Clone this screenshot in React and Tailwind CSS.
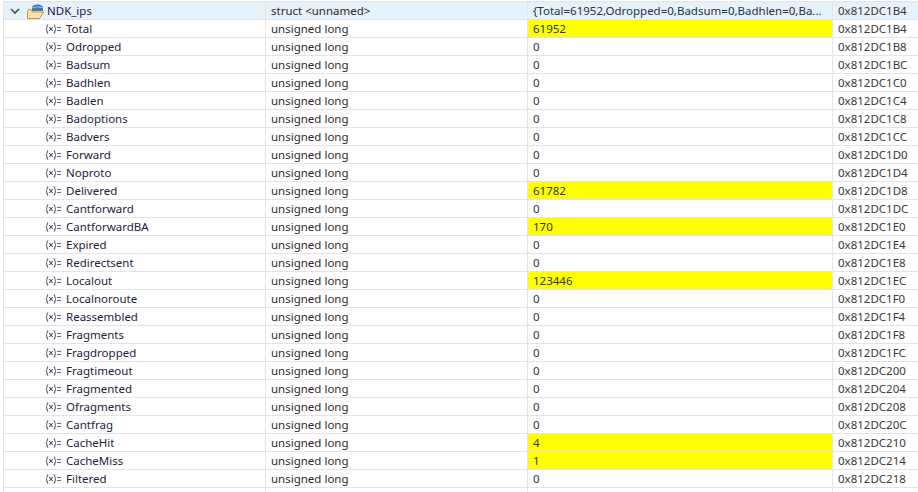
const rows = [
  ["Total", "61952", "0x812DC1B4", 1],
  ["Odropped", "0", "0x812DC1B8"],
  ["Badsum", "0", "0x812DC1BC"],
  ["Badhlen", "0", "0x812DC1C0"],
  ["Badlen", "0", "0x812DC1C4"],
  ["Badoptions", "0", "0x812DC1C8"],
  ["Badvers", "0", "0x812DC1CC"],
  ["Forward", "0", "0x812DC1D0"],
  ["Noproto", "0", "0x812DC1D4"],
  ["Delivered", "61782", "0x812DC1D8", 1],
  ["Cantforward", "0", "0x812DC1DC"],
  ["CantforwardBA", "170", "0x812DC1E0", 1],
  ["Expired", "0", "0x812DC1E4"],
  ["Redirectsent", "0", "0x812DC1E8"],
  ["Localout", "123446", "0x812DC1EC", 1],
  ["Localnoroute", "0", "0x812DC1F0"],
  ["Reassembled", "0", "0x812DC1F4"],
  ["Fragments", "0", "0x812DC1F8"],
  ["Fragdropped", "0", "0x812DC1FC"],
  ["Fragtimeout", "0", "0x812DC200"],
  ["Fragmented", "0", "0x812DC204"],
  ["Ofragments", "0", "0x812DC208"],
  ["Cantfrag", "0", "0x812DC20C"],
  ["CacheHit", "4", "0x812DC210", 1],
  ["CacheMiss", "1", "0x812DC214", 1],
  ["Filtered", "0", "0x812DC218"],
];

function Row({ name, icon, type, value, addr, hl, selected }) {
  return (
    <div className={`flex h-[18px] shrink-0 border-b border-[#e4e4e4] ${selected ? "bg-[#e5f1fb]" : "bg-white"}`}>
      <div className="flex w-[262px] shrink-0 items-center border-r border-[#e4e4e4] pt-px">
        {icon}
        <span className="truncate text-[#22223c]">{name}</span>
      </div>
      <div className="flex w-[262px] shrink-0 items-center border-r border-[#e4e4e4] pt-px pl-[5px] text-[#2b2b2b]">{type}</div>
      <div className={`flex w-[305px] shrink-0 items-center border-r border-[#e4e4e4] pt-px pl-[5px] text-[#2a3346] ${hl ? "bg-[#ffff00]" : ""}`}>
        <span className="whitespace-nowrap">{value}</span>
      </div>
      <div className="flex min-w-0 flex-1 items-center pt-px pl-[5px] whitespace-nowrap text-[#3a3a3a]">{addr}</div>
    </div>
  );
}

function VarIcon() {
  return (
    <span className="ml-[42px] mr-[5px] flex w-[15px] shrink-0 items-center justify-center">
      <svg width="15" height="10" viewBox="0 0 15 10" fill="none" stroke="#3c4a66" strokeWidth="1.1">
        <path d="M2 0.5C0.300 3 0.300 7 2 9.500" />
        <path d="M3.300 3L6.700 7M6.700 3L3.300 7" />
        <path d="M8 0.500C9.700 3 9.700 7 8 9.500" />
        <path d="M11 3.500H15M11 6.500H15" stroke="#5f6b80" />
      </svg>
    </span>
  );
}

function StructIcon() {
  return (
    <span className="ml-[6px] mr-[3px] flex shrink-0 items-center">
      <svg width="10" height="6" viewBox="0 0 10 6" fill="none" stroke="#4a4a4a" strokeWidth="1.6" className="mr-[7px]">
        <path d="M1 1L5 5L9 1" />
      </svg>
      <svg width="17" height="15" viewBox="0 0 17 15">
        <path d="M5 6V3.500C5 1.500 8 0.500 10.500 0.500C13 0.500 16 1.500 16 3.500V7H5Z" fill="#3f78b5" />
        <path d="M5 4C7 2.500 14 2.500 16 4" stroke="#a9cbea" fill="none" />
        <path d="M0.500 7.500V14.500H12.500L16.500 8H5.500L4 5.500H1.500Z" fill="#fbe3a8" stroke="#c9923c" />
      </svg>
    </span>
  );
}

export default function App() {
  return (
    <div
      className="h-[492px] w-[918px] overflow-hidden bg-white pt-px pl-[3px] text-[11.5px] leading-[16px]"
      style={{ fontFamily: '"Noto Sans", sans-serif' }}
    >
      <div className="flex h-full flex-col border-l border-[#e4e4e4]">
        <div className="h-px shrink-0 bg-[#e4e4e4]" />
        <Row
          selected
          icon={<StructIcon />}
          name="NDK_ips"
          type="struct <unnamed>"
          value="{Total=61952,Odropped=0,Badsum=0,Badhlen=0,Ba..."
          addr="0x812DC1B4"
        />
        {rows.map(([name, value, addr, hl]) => (
          <Row key={name} icon={<VarIcon />} name={name} type="unsigned long" value={value} addr={addr} hl={hl} />
        ))}
        <Row
          icon={<span className="ml-[27px] mt-[3px] h-[2px] w-[7px] rounded-t-sm bg-[#5aa469]" />}
          name=""
          type=""
          value=""
          addr=""
        />
      </div>
    </div>
  );
}
